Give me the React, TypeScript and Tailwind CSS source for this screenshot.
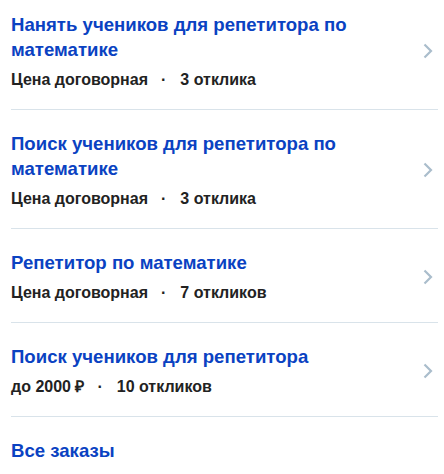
const orders = [
  { title: 'Нанять учеников для репетитора по математике', price: 'Цена договорная', replies: '3 отклика' },
  { title: 'Поиск учеников для репетитора по математике', price: 'Цена договорная', replies: '3 отклика' },
  { title: 'Репетитор по математике', price: 'Цена договорная', replies: '7 откликов' },
  { title: 'Поиск учеников для репетитора', price: 'до 2000 ₽', replies: '10 откликов' },
];

function Chevron() {
  return (
    <svg viewBox="0 0 10 16" className="w-[10px] h-[16px] shrink-0" fill="none" stroke="#aabdcc" strokeWidth={2.2}>
      <path d="M1.5 1.5 L8 8 L1.5 14.5" />
    </svg>
  );
}

export default function App() {
  return (
    <div className="bg-white min-h-screen overflow-hidden font-['Liberation_Sans',Arial,sans-serif]">
      <div className="pl-[11px] pr-[6px] -mt-[9px]">
        {orders.map((o, i) => (
          <a
            key={i}
            href="#"
            className="flex items-center justify-between pt-[21px] pb-[19px] border-b border-[#d9e3ea]"
          >
            <div className="pr-6">
              <div className="text-[18.6px] leading-[25px] font-bold text-[#0a42c2]">{o.title}</div>
              <div className="mt-[8px] text-[16px] leading-[20px] font-bold text-[#222222]">
                {o.price}
                <span className="ml-[13px] mr-[14px]">·</span>
                {o.replies}
              </div>
            </div>
            <div className="pr-[5px]">
              <Chevron />
            </div>
          </a>
        ))}
        <div className="pt-[21px] pb-4">
          <a href="#" className="text-[18.6px] leading-[25px] font-bold text-[#0a42c2]">
            Все заказы
          </a>
        </div>
      </div>
    </div>
  );
}
